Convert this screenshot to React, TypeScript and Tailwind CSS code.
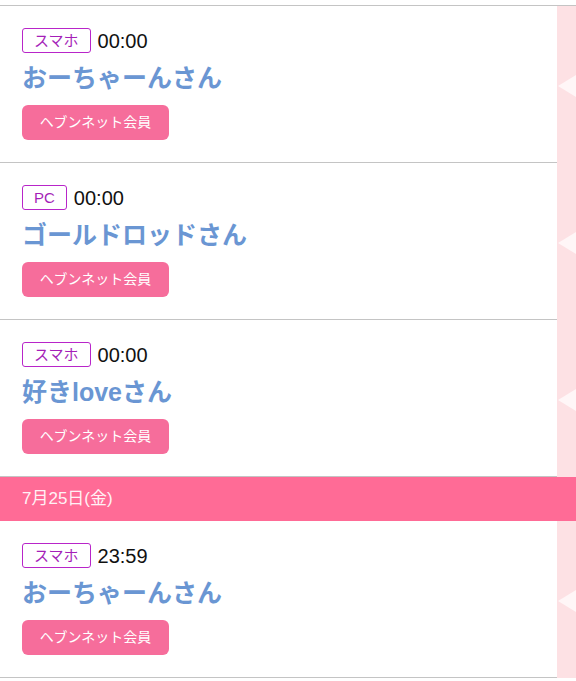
import React from 'react';

type Entry = { device: string; time: string; name: string };

const jp = { fontFamily: '"Liberation Sans", "Noto Sans CJK JP", sans-serif' };

const EntryRow: React.FC<{ entry: Entry }> = ({ entry }) => (
  <div className="flex h-[157px]">
    <div className="w-[557px] border-b border-[#c4c4c4] pl-[22px] pt-[22px]">
      <div className="flex items-center gap-[7px]">
        <span className="flex h-[25px] items-center rounded-[3px] border-[1.5px] border-[#b825c9] px-[11px] text-[15px] leading-none text-[#a51fb8]">
          {entry.device}
        </span>
        <span className="text-[20px] leading-none text-[#111]">{entry.time}</span>
      </div>
      <div className="mt-[10px] text-[25px] font-bold leading-[30px] text-[#6a96d3]">
        {entry.name}
      </div>
      <button className="mt-[12px] flex h-[35px] w-[147px] items-center justify-center rounded-[6px] bg-[#f66d9b] text-[14px] text-white">
        ヘブンネット会員
      </button>
    </div>
    <div className="relative flex-1 bg-[#fde1e4]">
      <svg className="absolute left-0 top-[62px]" width="19" height="36" viewBox="0 0 19 36">
        <polygon points="1,18 19,7 19,29" fill="#fff6f7" />
      </svg>
    </div>
  </div>
);

export default function App() {
  const before: Entry[] = [
    { device: 'スマホ', time: '00:00', name: 'おーちゃーんさん' },
    { device: 'PC', time: '00:00', name: 'ゴールドロッドさん' },
    { device: 'スマホ', time: '00:00', name: '好きloveさん' },
  ];
  const after: Entry[] = [{ device: 'スマホ', time: '23:59', name: 'おーちゃーんさん' }];

  return (
    <div className="h-[681px] w-[576px] overflow-hidden bg-white" style={jp}>
      <div className="h-[6px] border-b border-[#c4c4c4]" />
      {before.map((e, i) => (
        <EntryRow key={i} entry={e} />
      ))}
      <div className="flex h-[44px] items-center bg-[#ff6b96] pl-[22px] text-[17px] text-[#fff1f5]">
        7月25日(金)
      </div>
      {after.map((e, i) => (
        <EntryRow key={i} entry={e} />
      ))}
    </div>
  );
}
